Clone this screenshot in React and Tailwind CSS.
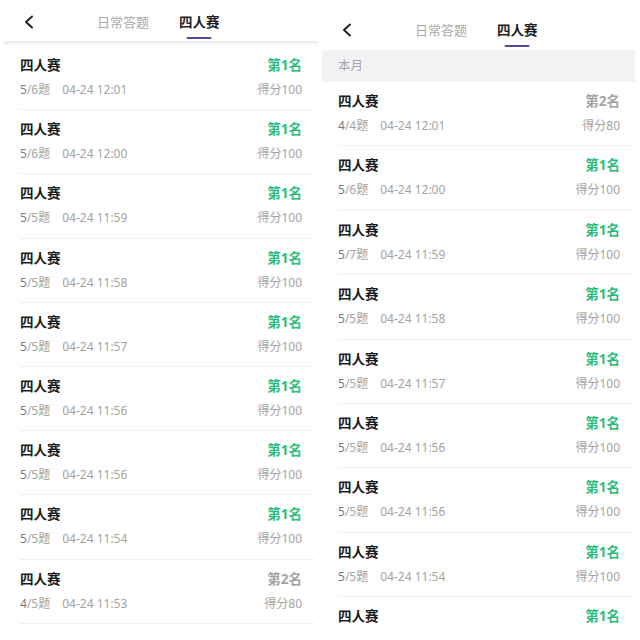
const leftRecords = [
  { done: "5", total: "/6题", time: "04-24 12:01", rank: 1, score: 100 },
  { done: "5", total: "/6题", time: "04-24 12:00", rank: 1, score: 100 },
  { done: "5", total: "/5题", time: "04-24 11:59", rank: 1, score: 100 },
  { done: "5", total: "/5题", time: "04-24 11:58", rank: 1, score: 100 },
  { done: "5", total: "/5题", time: "04-24 11:57", rank: 1, score: 100 },
  { done: "5", total: "/5题", time: "04-24 11:56", rank: 1, score: 100 },
  { done: "5", total: "/5题", time: "04-24 11:56", rank: 1, score: 100 },
  { done: "5", total: "/5题", time: "04-24 11:54", rank: 1, score: 100 },
  { done: "4", total: "/5题", time: "04-24 11:53", rank: 2, score: 80 },
];

// last row is cut off by the screen edge, only its title line shows
const rightRecords = [
  { done: "4", total: "/4题", time: "04-24 12:01", rank: 2, score: 80 },
  { done: "5", total: "/6题", time: "04-24 12:00", rank: 1, score: 100 },
  { done: "5", total: "/7题", time: "04-24 11:59", rank: 1, score: 100 },
  { done: "5", total: "/5题", time: "04-24 11:58", rank: 1, score: 100 },
  { done: "5", total: "/5题", time: "04-24 11:57", rank: 1, score: 100 },
  { done: "5", total: "/5题", time: "04-24 11:56", rank: 1, score: 100 },
  { done: "5", total: "/5题", time: "04-24 11:56", rank: 1, score: 100 },
  { done: "5", total: "/5题", time: "04-24 11:54", rank: 1, score: 100 },
  { rank: 1 },
];

function Header({ tall }) {
  return (
    <div className={`relative flex items-end ${tall ? "h-[50px] pb-[10px]" : "h-[41px] pb-[9px]"}`}>
      <div className="w-[93px] pl-[20px] flex items-center h-5">
        <svg width="10" height="14" viewBox="0 0 10 14" fill="none">
          <path d="M8 1.5 L2 7 L8 12.5" stroke="#222" strokeWidth="2" strokeLinecap="round" strokeLinejoin="round" />
        </svg>
      </div>
      <div className="h-5 leading-5 text-[13px] text-[#a8a8a8]">日常答题</div>
      <div className="relative ml-[30px] h-5 leading-5 text-[13.5px] font-bold text-[#1f1f1f]">
        四人赛
        <div className="absolute left-1/2 -translate-x-1/2 -bottom-[7px] w-[25px] h-[2.5px] rounded-full bg-[#54489a]" />
      </div>
    </div>
  );
}

function Row({ item, tall }) {
  const first = item.rank === 1;
  return (
    <div className={`${tall ? "h-[64.4px]" : "h-[64.2px]"} ml-4 mr-[3px] pr-[13px] pt-[9px] border-b border-[#f1f1f1]`}>
      <div className="flex justify-between h-5 leading-5">
        <span className="text-[13.5px] font-bold text-[#1c1c1c]">四人赛</span>
        <span className={`text-[13.5px] font-bold ${first ? "text-[#2dbd78]" : "text-[#a3a3a3]"}`}>
          第{item.rank}名
        </span>
      </div>
      {item.time && (
        <div className="flex justify-between mt-[7px] h-4 leading-4 text-[12px] text-[#a3a3a3]">
          <span>
            <span className="text-[#7a7a7a]">{item.done}</span>
            {item.total}
            <span className="ml-3">{item.time}</span>
          </span>
          <span>得分{item.score}</span>
        </div>
      )}
    </div>
  );
}

export default function App() {
  return (
    <div
      className="w-[640px] h-[640px] overflow-hidden bg-white flex gap-1 px-1"
      style={{ fontFamily: '"Noto Sans", "Noto Sans CJK SC", sans-serif' }}
    >
      <div className="w-[314px] shrink-0">
        <Header />
        <div className="h-[5px] bg-gradient-to-b from-[#e9e9e9] to-white" />
        {leftRecords.map((item, i) => (
          <Row key={i} item={item} />
        ))}
      </div>
      <div className="w-[314px] shrink-0">
        <Header tall />
        <div className="h-[32px] mr-[1px] flex items-center pl-4 bg-[#f2f2f4] text-[12.5px] text-[#a6a6a6]">
          本月
        </div>
        {rightRecords.map((item, i) => (
          <Row key={i} item={item} tall />
        ))}
      </div>
    </div>
  );
}
